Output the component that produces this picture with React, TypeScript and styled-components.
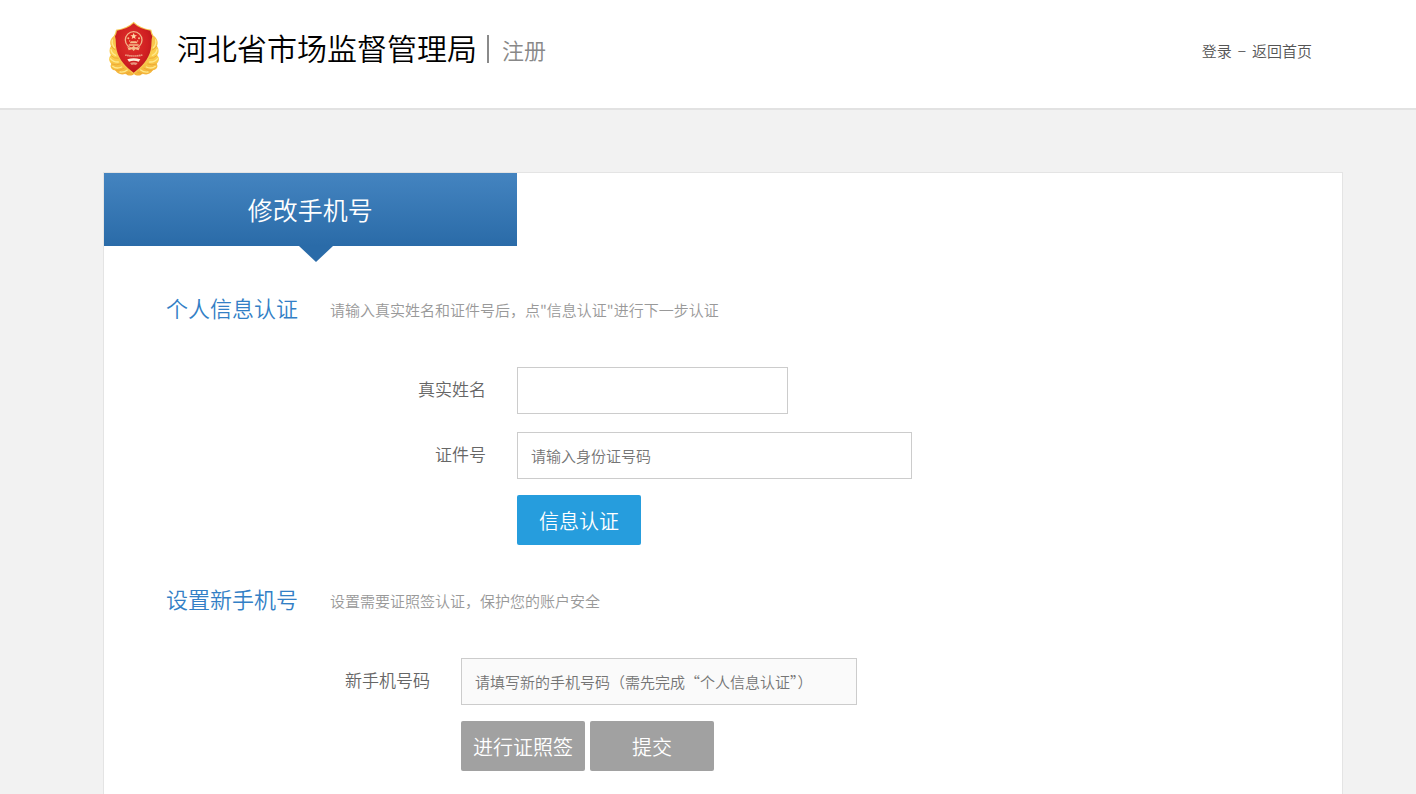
import React from 'react';
import styled, { createGlobalStyle } from 'styled-components';

const GlobalStyle = createGlobalStyle`
  * { box-sizing: border-box; }
  body {
    margin: 0;
    background: #f2f2f2;
    color: #666;
    font-family: "Noto Sans CJK SC", "Liberation Sans", sans-serif;
    font-size: 15px;
    font-weight: 350;
  }
  h1, h2, p { margin: 0; font-weight: inherit; }
  input, button { font: inherit; }
`;

const Page = styled.div`
  display: flex;
  flex-direction: column;
  min-height: 100vh;
`;

const Header = styled.header`
  display: flex;
  align-items: center;
  justify-content: space-between;
  height: 110px;
  padding: 0 104px 10px 108px;
  background: #fff;
  border-bottom: 2px solid #e2e2e2;
`;

const Brand = styled.div`
  display: flex;
  align-items: center;
`;

const SiteName = styled.h1`
  margin-left: 15px;
  padding-bottom: 4px;
  font-size: 30px;
  line-height: 40px;
  color: #000;
`;

const PageName = styled.span`
  margin-left: 10px;
  padding-left: 13px;
  border-left: 2px solid #8a8a8a;
  font-size: 22px;
  line-height: 28px;
  color: #888;
`;

const TopLinks = styled.nav`
  display: flex;
  gap: 6px;
  padding-top: 4px;
  line-height: 20px;
`;

const TopLink = styled.a`
  color: #555;
  text-decoration: none;
`;

const Main = styled.main`
  display: flex;
  flex: 1;
  padding: 62px 73px 0 103px;
`;

const Card = styled.div`
  flex: 1;
  padding-bottom: 23px;
  background: #fff;
  border: 1px solid #e4e4e4;
  border-bottom: 0;
`;

const Tab = styled.h2`
  position: relative;
  width: calc(100% / 3);
  background: linear-gradient(#4484c0, #2a6ba8);
  color: #fff;
  font-size: 25px;
  line-height: 73px;
  text-align: center;

  &::after {
    content: "";
    position: absolute;
    top: 100%;
    left: 195px;
    border: 17px solid transparent;
    border-top: 16px solid #2a6ba8;
    border-bottom: 0;
  }
`;

const Section = styled.section<{ $top: number }>`
  padding: ${(p) => p.$top}px 62px 0;
`;

const SectionHead = styled.div`
  display: flex;
  align-items: flex-start;
  gap: 30px;
  margin-bottom: 44px;
`;

const SectionTitle = styled.h2`
  min-width: 134px;
  font-size: 22px;
  line-height: 32px;
  color: #337fc6;
`;

const Hint = styled.p`
  padding-top: 7px;
  line-height: 24px;
  color: #999;
`;

const Form = styled.form<{ $labels: number }>`
  display: grid;
  grid-template-columns: ${(p) => p.$labels}px 1fr;
  column-gap: 31px;
`;

const Label = styled.label`
  font-size: 17px;
  line-height: 44px;
  text-align: right;
`;

const Field = styled.input<{ $width: number }>`
  width: ${(p) => p.$width}px;
  max-width: 100%;
  height: 47px;
  margin-bottom: 18px;
  padding: 0 13px;
  border: 1px solid #ccc;
  border-radius: 0;
  background: #fff;
  color: #333;

  &::placeholder { color: #757575; opacity: 1; }
  &:disabled { background: #fafafa; }
`;

const Actions = styled.div`
  grid-column: 2;
  display: flex;
  gap: 5px;
  margin-top: -2px;
`;

const Button = styled.button`
  width: 124px;
  height: 50px;
  padding: 0;
  border: 0;
  border-radius: 2px;
  background: #269ddd;
  color: #fff;
  font-size: 20px;

  &:disabled { background: #a1a1a1; }
`;

const Emblem = () => (
  <svg width="54" height="56" viewBox="24 18 162 168" aria-hidden="true">
    <defs>
      <linearGradient id="gold" x1="0" y1="0" x2="0" y2="1">
        <stop offset="0" stopColor="#f9c04a" />
        <stop offset="0.5" stopColor="#fbd04e" />
        <stop offset="1" stopColor="#f3b23a" />
      </linearGradient>
      <radialGradient id="red" cx="0.45" cy="0.4" r="0.65">
        <stop offset="0" stopColor="#e0332c" />
        <stop offset="0.65" stopColor="#d01f22" />
        <stop offset="1" stopColor="#b5141b" />
      </radialGradient>
    </defs>
    <path fill="url(#gold)" d="M43 62C31 70 28 82 33 93C27 102 27 113 33 121C25 127 26 139 34 146C28 155 35 165 46 166C51 178 66 181 77 176C84 184 96 183 102 177C108 183 121 184 127 176C139 181 153 178 158 166C170 164 176 155 170 146C179 139 179 127 171 121C178 113 177 102 171 93C176 82 172 70 161 62Z" />
    <g fill="none" stroke="#ffe98c" strokeWidth="4" strokeLinecap="round">
      <path d="M37 75Q34 88 44 98M33 104Q35 116 47 121M31 131Q40 142 55 141M38 154Q49 163 65 156M60 171Q72 173 82 165" />
      <path d="M167 75Q170 88 160 98M171 104Q169 116 157 121M173 131Q164 142 149 141M166 154Q155 163 139 156M144 171Q132 173 122 165" />
    </g>
    <g fill="none" stroke="#eeaa35" strokeWidth="3" strokeLinecap="round">
      <path d="M34 94Q41 104 49 106M33 122Q43 132 56 130M35 147Q49 153 61 147M47 166Q61 168 72 160M78 176Q88 174 95 169" />
      <path d="M170 94Q163 104 155 106M171 122Q161 132 148 130M169 147Q155 153 143 147M157 166Q143 168 132 160M126 176Q116 174 109 169" />
    </g>
    <path d="M101 20C88 33 71 41 48 44Q46 56 41 64C45 74 42 89 46 105C52 136 76 161 101 178C126 161 150 136 156 105C160 89 157 74 161 64Q156 56 154 44C131 41 114 33 101 20Z" fill="#f6c650" />
    <path d="M101 25C88 37 72 44 51 47Q49 58 45 64C49 75 46 90 50 105C56 134 79 157 101 173C123 157 146 134 152 105C156 90 153 75 157 64Q153 58 151 47C130 44 114 37 101 25Z" fill="url(#red)" />
    <circle cx="101" cy="75" r="25" fill="#d9261f" stroke="#f2b58a" strokeWidth="4" />
    <path d="M101 54L104 61H111L105 65L107 72L101 68L95 72L97 65L91 61H98Z" fill="#ffd9a8" />
    <g fill="#f6bd8a">
      <circle cx="85" cy="70" r="3" /><circle cx="117" cy="70" r="3" />
      <circle cx="89" cy="78" r="2" /><circle cx="113" cy="78" r="2" />
      <path d="M89 85L93 79H109L113 85ZM86 88H116V92H86Z" />
      <path d="M82 95Q91 101 96 97L101 92L106 97Q111 101 120 95L116 106L106 103L101 108L96 103L86 106Z" />
    </g>
    <path d="M76 120Q101 126 127 120" fill="none" stroke="#f0b394" strokeWidth="5" strokeDasharray="4 2" />
    <path d="M82 133Q101 126 121 133L116 140Q101 135 87 140Z" fill="#fff0dc" />
    <path d="M90 144Q101 139 113 144L108 150Q101 147 95 150Z" fill="#e7957f" />
  </svg>
);

export default function App() {
  return (
    <Page>
      <GlobalStyle />
      <Header>
        <Brand>
          <Emblem />
          <SiteName>河北省市场监督管理局</SiteName>
          <PageName>注册</PageName>
        </Brand>
        <TopLinks>
          <TopLink href="#login">登录</TopLink>
          <span>−</span>
          <TopLink href="#home">返回首页</TopLink>
        </TopLinks>
      </Header>
      <Main>
        <Card>
          <Tab>修改手机号</Tab>
          <Section $top={45}>
            <SectionHead>
              <SectionTitle>个人信息认证</SectionTitle>
              <Hint>请输入真实姓名和证件号后，点"信息认证"进行下一步认证</Hint>
            </SectionHead>
            <Form $labels={320}>
              <Label htmlFor="name">真实姓名</Label>
              <Field id="name" type="text" $width={271} />
              <Label htmlFor="idno">证件号</Label>
              <Field id="idno" type="text" $width={395} placeholder="请输入身份证号码" />
              <Actions>
                <Button type="button">信息认证</Button>
              </Actions>
            </Form>
          </Section>
          <Section $top={37}>
            <SectionHead>
              <SectionTitle>设置新手机号</SectionTitle>
              <Hint>设置需要证照签认证，保护您的账户安全</Hint>
            </SectionHead>
            <Form $labels={264}>
              <Label htmlFor="phone">新手机号码</Label>
              <Field
                id="phone"
                type="tel"
                $width={396}
                placeholder="请填写新的手机号码（需先完成“个人信息认证”）"
                disabled
              />
              <Actions>
                <Button type="button" disabled>进行证照签</Button>
                <Button type="submit" disabled>提交</Button>
              </Actions>
            </Form>
          </Section>
        </Card>
      </Main>
    </Page>
  );
}
